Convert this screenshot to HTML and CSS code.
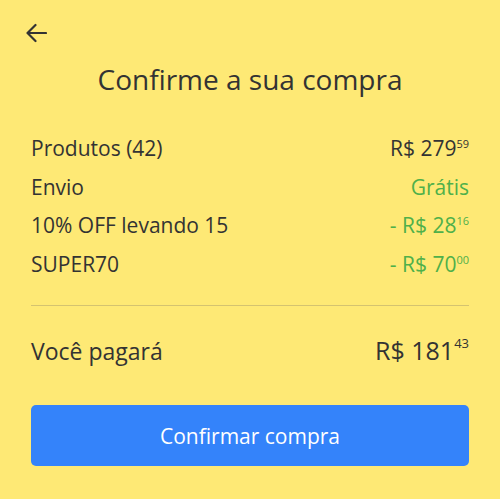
FILE: index.html
```html
<!DOCTYPE html>
<html lang="pt-BR">
<head>
<meta charset="utf-8">
<link rel="stylesheet" href="styles.css">
</head>
<body>
<div class="page">
  <div class="topbar">
    <svg class="back" width="22" height="20" viewBox="0 0 22 20" aria-label="Voltar">
      <path d="M21 10H2.5M10.5 2L2.5 10l8 8" fill="none" stroke="#333" stroke-width="2.2" stroke-linecap="round" stroke-linejoin="round"/>
    </svg>
  </div>
  <h1 class="title">Confirme a sua compra</h1>
  <div class="rows">
    <div class="row"><span>Produtos (42)</span><span class="price">R$ 279<sup>59</sup></span></div>
    <div class="row"><span>Envio</span><span class="price green">Grátis</span></div>
    <div class="row"><span>10% OFF levando 15</span><span class="price green">- R$ 28<sup>16</sup></span></div>
    <div class="row"><span>SUPER70</span><span class="price green">- R$ 70<sup>00</sup></span></div>
  </div>
  <hr class="divider">
  <div class="row total"><span>Você pagará</span><span class="price big">R$ 181<sup>43</sup></span></div>
  <button class="confirm">Confirmar compra</button>
</div>
</body>
</html>
```
FILE: styles.css
```css
html, body {
  margin: 0;
  padding: 0;
  background: #fee975;
}
body {
  font-family: "Open Sans", "Lato", sans-serif;
  color: #333333;
  width: 500px;
  height: 499px;
  overflow: hidden;
}
.page {
  padding: 0 31px;
}
.topbar {
  height: 62px;
  display: flex;
  align-items: flex-start;
  padding-top: 23px;
  box-sizing: border-box;
}
.back {
  display: block;
  margin-left: -6px;
}
.title {
  margin: 0;
  text-align: center;
  font-weight: 400;
  font-size: 28px;
  line-height: 34px;
  height: 67px;
  color: #333;
}
.rows {
  display: flex;
  flex-direction: column;
}
.row {
  display: flex;
  justify-content: space-between;
  align-items: baseline;
  font-size: 21px;
  line-height: 38.5px;
  color: #333;
}
.price sup {
  font-size: 11px;
  vertical-align: top;
  line-height: 1;
  position: relative;
  top: 9px;
  margin-left: 0;
}
.green {
  color: #4fb04a;
}
.divider {
  border: 0;
  border-top: 1px solid #d4c370;
  margin: 22px 0 0;
}
.total {
  margin-top: 24px;
  line-height: 40px;
  font-size: 23px;
}
.big {
  font-size: 25px;
}
.big sup {
  font-size: 13px;
  top: 7px;
  margin-left: 0;
}
.confirm {
  display: block;
  width: 100%;
  margin-top: 34px;
  height: 61px;
  border: 0;
  border-radius: 5px;
  background: #3483fa;
  color: #fff;
  font-family: inherit;
  font-size: 21px;
}
```
